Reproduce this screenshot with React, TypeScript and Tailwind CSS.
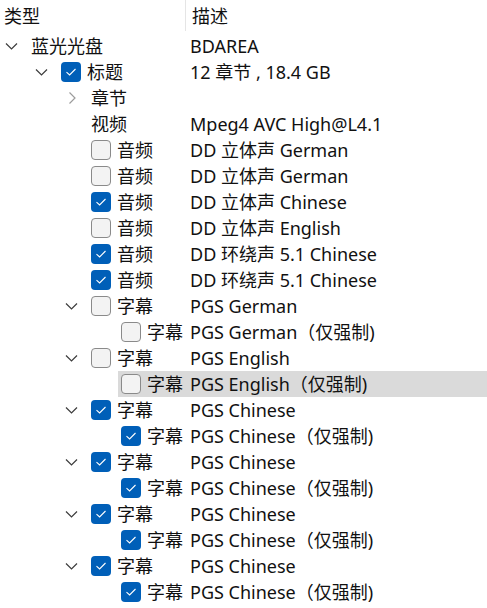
type Row = {
  level: 0 | 1 | 2 | 3;
  chevron?: "down" | "right";
  check?: boolean;
  label: string;
  desc: string;
  active?: boolean;
};

const rows: Row[] = [
  { level: 0, chevron: "down", label: "蓝光光盘", desc: "BDAREA" },
  { level: 1, chevron: "down", check: true, label: "标题", desc: "12 章节 , 18.4 GB" },
  { level: 2, chevron: "right", label: "章节", desc: "" },
  { level: 2, label: "视频", desc: "Mpeg4 AVC High@L4.1" },
  { level: 2, check: false, label: "音频", desc: "DD 立体声 German" },
  { level: 2, check: false, label: "音频", desc: "DD 立体声 German" },
  { level: 2, check: true, label: "音频", desc: "DD 立体声 Chinese" },
  { level: 2, check: false, label: "音频", desc: "DD 立体声 English" },
  { level: 2, check: true, label: "音频", desc: "DD 环绕声 5.1 Chinese" },
  { level: 2, check: true, label: "音频", desc: "DD 环绕声 5.1 Chinese" },
  { level: 2, chevron: "down", check: false, label: "字幕", desc: "PGS German" },
  { level: 3, check: false, label: "字幕", desc: "PGS German（仅强制)" },
  { level: 2, chevron: "down", check: false, label: "字幕", desc: "PGS English" },
  { level: 3, check: false, label: "字幕", desc: "PGS English（仅强制)", active: true },
  { level: 2, chevron: "down", check: true, label: "字幕", desc: "PGS Chinese" },
  { level: 3, check: true, label: "字幕", desc: "PGS Chinese（仅强制)" },
  { level: 2, chevron: "down", check: true, label: "字幕", desc: "PGS Chinese" },
  { level: 3, check: true, label: "字幕", desc: "PGS Chinese（仅强制)" },
  { level: 2, chevron: "down", check: true, label: "字幕", desc: "PGS Chinese" },
  { level: 3, check: true, label: "字幕", desc: "PGS Chinese（仅强制)" },
  { level: 2, chevron: "down", check: true, label: "字幕", desc: "PGS Chinese" },
  { level: 3, check: true, label: "字幕", desc: "PGS Chinese（仅强制)" },
];

// indent + chevron slot, then the rest of the name column (total 190px)
const indentWidth = ["w-[28px]", "w-[58px]", "w-[88px]", "w-[118px]"];
const nameWidth = ["w-[162px]", "w-[132px]", "w-[102px]", "w-[72px]"];
const chevronPad = ["pl-0", "pl-[30px]", "pl-[60px]", "pl-[90px]"];

function Chevron({ dir }: { dir: "down" | "right" }) {
  if (dir === "right") {
    return (
      <svg width="23" height="12" viewBox="0 0 23 12" className="text-[#9c9c9c]">
        <path d="M9.5 0.5 L15 6 L9.5 11.5" fill="none" stroke="currentColor" strokeWidth="1.2" />
      </svg>
    );
  }
  return (
    <svg width="23" height="8" viewBox="0 0 23 8" className="text-[#3c3c3c]">
      <path d="M6 1.5 L11.5 7 L17 1.5" fill="none" stroke="currentColor" strokeWidth="1.2" />
    </svg>
  );
}

function Checkbox({ checked }: { checked: boolean }) {
  if (checked) {
    return (
      <span className="flex h-[20px] w-[20px] shrink-0 items-center justify-center rounded-[4px] bg-[#005fb8]">
        <svg width="12" height="10" viewBox="0 0 12 10">
          <path d="M1.5 5.2 L4.6 8 L10.5 2" fill="none" stroke="white" strokeWidth="1.1" />
        </svg>
      </span>
    );
  }
  return (
    <span className="h-[20px] w-[20px] shrink-0 rounded-[4px] border border-[#8a8a8a] bg-[#f3f3f3]" />
  );
}

export default function App() {
  return (
    <div
      className="h-[608px] w-[487px] overflow-hidden bg-white text-[18px] text-[#111111]"
      style={{ fontFamily: '"Noto Sans", "Noto Sans CJK SC", sans-serif' }}
    >
      <div className="flex h-[33px] items-start">
        <div className="flex h-[32px] w-[185px] items-center pl-[4px]">类型</div>
        <div className="h-[31px] w-px bg-[#e5e5e5]" />
        <div className="flex h-[32px] items-center pl-[6px]">描述</div>
      </div>
      {rows.map((r, i) => (
        <div key={i} className="flex h-[26px] items-center">
          <div className={`flex h-full shrink-0 items-center ${indentWidth[r.level]} ${chevronPad[r.level]}`}>
            {r.chevron && <Chevron dir={r.chevron} />}
          </div>
          <div className={`flex h-full flex-1 items-center ${r.active ? "bg-[#dadada]" : ""}`}>
            <div className={`flex shrink-0 items-center gap-[6px] pl-[3px] ${nameWidth[r.level]}`}>
              {r.check !== undefined && <Checkbox checked={r.check} />}
              <span className="whitespace-nowrap leading-none">{r.label}</span>
            </div>
            <span className="whitespace-nowrap leading-none">{r.desc}</span>
          </div>
        </div>
      ))}
    </div>
  );
}
